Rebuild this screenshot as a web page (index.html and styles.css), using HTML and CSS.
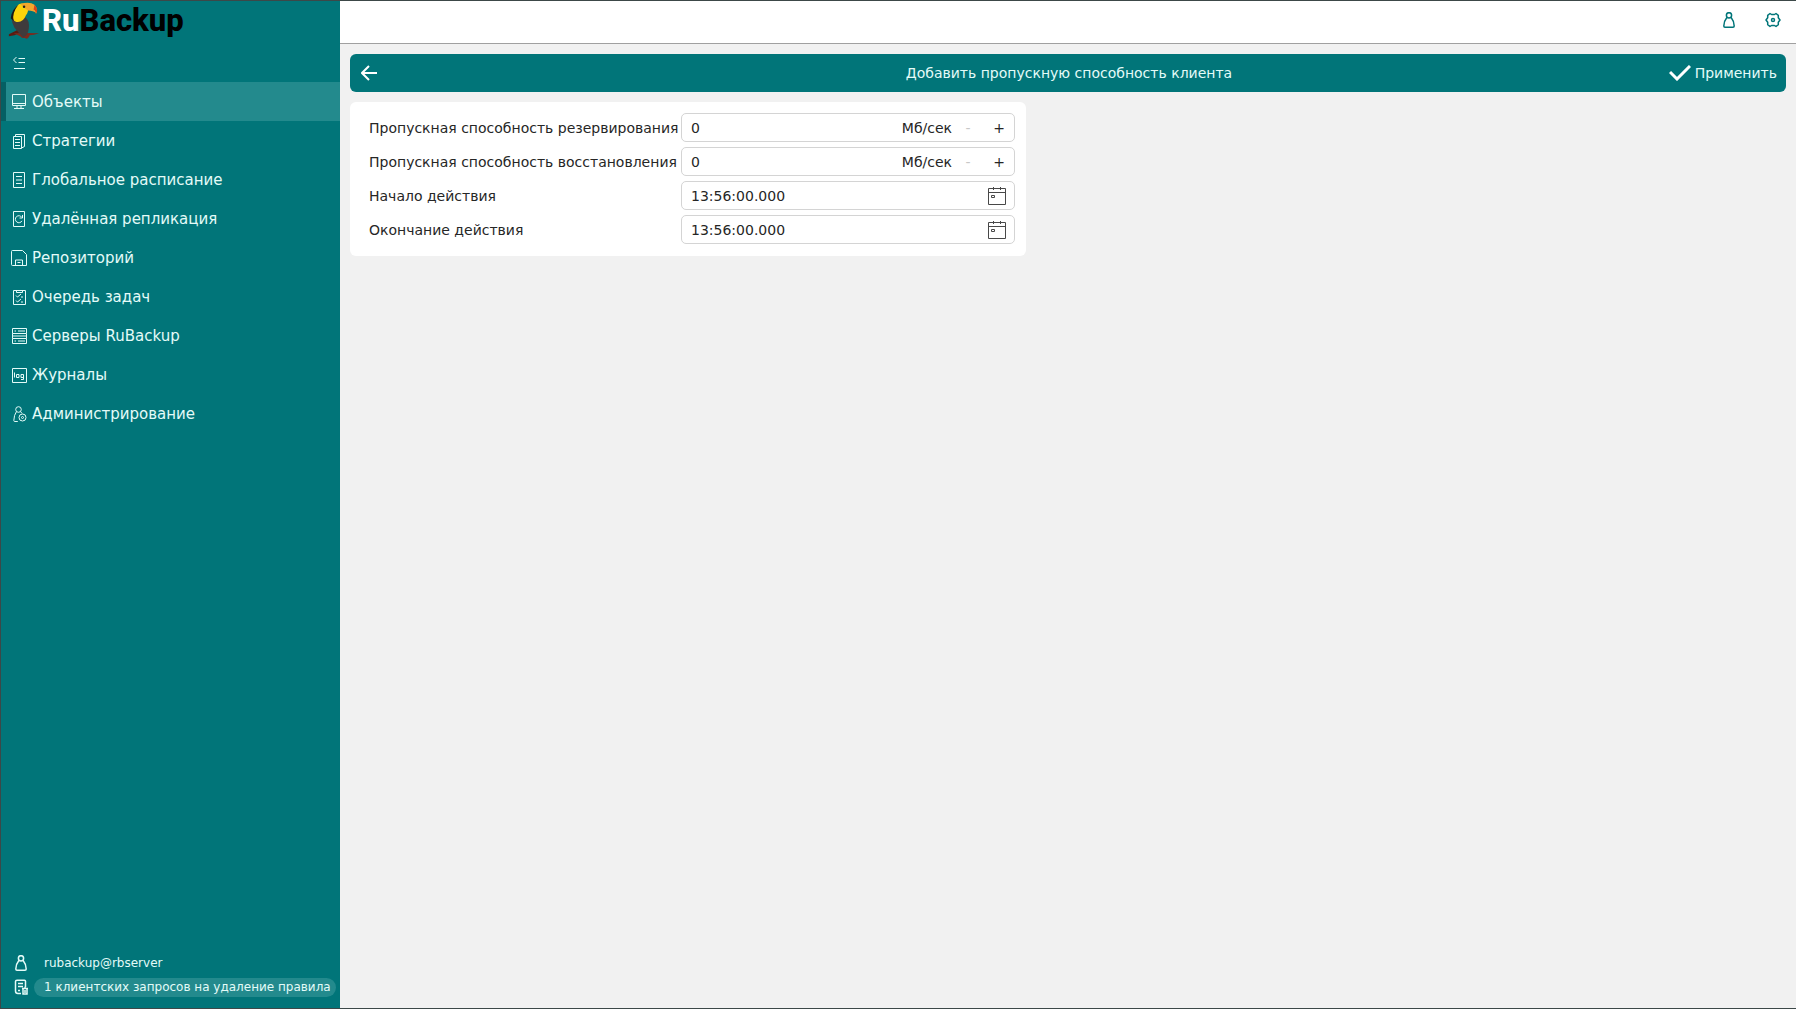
FILE: index.html
```html
<!DOCTYPE html>
<html lang="ru">
<head>
<meta charset="utf-8">
<title>RuBackup</title>
<link rel="stylesheet" href="styles.css">
</head>
<body>
<div class="app">
  <aside class="sidebar">
    <div class="logo">
      <svg class="toucan" viewBox="0 0 34 40" aria-hidden="true">
        <path d="M0 34 L10 29 L12 32 L6 35 L0 36 Z" fill="#5a1a12"/>
        <path d="M5 33 Q18 32 32 33 Q26 35 22 35 Q20 40 17 38 Q13 38 12 36 Z" fill="#7a2a1d"/>
        <path d="M3 17 Q8 11 17 16 Q22 19 21 28 Q20 36 15 37 Q10 32 6 27 Q3 22 3 17 Z" fill="#3f3b3c"/>
        <path d="M11 2 Q17 0 20 6 Q21 10 18 14 Q15 22 8 21 Q3 20 4 13 Q6 5 11 2 Z" fill="#fbd40b"/>
        <path d="M10 3 Q3 8 2 17 L5 20 Q3 12 10 3 Z" fill="#171717"/>
        <path d="M12 2 Q22 -1 27 3 Q31 7 29 12 Q26 9 20 9 L16 6 Z" fill="#f5a62b"/>
        <path d="M27 3 Q32 8 28 13 Q29 9 26 8 Z" fill="#d9441c"/>
        <circle cx="16" cy="5" r="1.3" fill="#26221d"/>
      </svg>
      <span class="brand"><span class="brand-ru">Ru</span>Backup</span>
    </div>
    <button class="collapse" type="button" aria-label="Свернуть меню">
      <svg class="icon" viewBox="0 0 16 16"><path d="M5.500 2L2.500 5l3 3M7.500 3.500h6.500M7.500 7.500h6.500M3 13.500h11"/></svg>
    </button>
    <nav class="nav">
      <a class="nav-item active" href="#"><svg class="icon" viewBox="0 0 16 16"><path d="M1.500 .5h13v11h-13zM1.500 9.500h13M6 11.500v3M10 11.500v3M3 14.500h10"/></svg>Объекты</a>
      <a class="nav-item" href="#"><svg class="icon" viewBox="0 0 16 16"><path d="M2.500 3.500h8v12h-8zM4.500 3.500v-2h9v12l-3 1.500M4 6.500h5M4 9.500h5M4 12.500h5"/></svg>Стратегии</a>
      <a class="nav-item" href="#"><svg class="icon" viewBox="0 0 16 16"><path d="M2.500 .5h11v15h-11zM5 4.500h6M5 8h6M5 11.500h6"/></svg>Глобальное расписание</a>
      <a class="nav-item" href="#"><svg class="icon" viewBox="0 0 16 16"><path d="M2.500 .5h11v15h-11zM10.800 6.300A3.500 3.500 0 1 0 11 9.800M11.500 4v3h-3"/></svg>Удалённая репликация</a>
      <a class="nav-item" href="#"><svg class="icon" viewBox="0 0 16 16"><path d="M1.500 .5h10l4 4v11H1.500q-1 0-1-1v-13q0-1 1-1zM4.500 15.500v-5.500h7v5.500M6.500 12.500h3"/></svg>Репозиторий</a>
      <a class="nav-item" href="#"><svg class="icon" viewBox="0 0 16 16"><path d="M2.500 1.500h12v14h-12zM5.500 1.500v2h6v-2M5 6.500l1.500 1.500 3.500-3M5 11.500l1.500 1.500 3.500-3M10 8h2M10 13h2"/></svg>Очередь задач</a>
      <a class="nav-item" href="#"><svg class="icon" viewBox="0 0 16 16"><path d="M1.500 .5h14v5h-14zM1.500 5.500v5M15.500 5.500v5M1.500 10.500h14v5h-14zM1.500 8h14M3.500 3h1.500M7 3h7M3.500 13h1.500M7 13h7"/></svg>Серверы RuBackup</a>
      <a class="nav-item" href="#"><svg class="icon" viewBox="0 0 16 16"><path d="M1.500 1.500h14v14h-14zM3.500 5.500v5M5.500 7.500h2.500v3h-2.500zM12.500 10.500h-2.500v-3h2.500v5h-2.500"/></svg>Журналы</a>
      <a class="nav-item" href="#"><svg class="icon" viewBox="0 0 16 16"><circle cx="7.500" cy="3.500" r="2.800"/><path d="M5.500 5.500Q3 9 2.800 14.500q0 1 1 1h3M9.500 5.500l1.500 2"/><circle cx="11.500" cy="11.500" r="3.500"/><circle cx="11.500" cy="11.500" r="1"/></svg>Администрирование</a>
    </nav>
    <footer class="status">
      <div class="status-row">
        <svg class="icon bold" viewBox="0 0 16 16"><circle cx="8" cy="3.300" r="2.600"/><path d="M6 5.300Q3 9 2.800 14q0 1.200 1.200 1.200h8q1.200 0 1.200-1.200Q13 9 10 5.300"/></svg>
        <span class="status-text">rubackup@rbserver</span>
      </div>
      <div class="status-row">
        <svg class="icon bold" viewBox="0 0 16 16"><path d="M8 14.500H5Q2.500 14.500 2.500 12V2.500Q2.500 1.200 4 1.200h7.500q1 0 1 1V8M5 4.500h5M5 7.500h5M5 11.500h2M9 9.500h6M10 10v5h4v-5M11.300 8.500h1.500M12 11v3"/></svg>
        <a class="status-text pill" href="#">1 клиентских запросов на удаление правила</a>
      </div>
    </footer>
  </aside>
  <div class="main">
    <header class="topbar">
      <button type="button" aria-label="Пользователь"><svg class="icon bold" viewBox="0 0 16 16"><circle cx="8" cy="3.300" r="2.600"/><path d="M6 5.300Q3 9 2.800 14q0 1.200 1.200 1.200h8q1.200 0 1.200-1.200Q13 9 10 5.300"/></svg></button>
      <button type="button" aria-label="Настройки"><svg class="icon bold" viewBox="0 0 16 16"><path d="M5 1.500L6.500 2.500h3L11 1.500l2.300 1.800v2.400L15 8l-1.700 2.300v2.400L11 14.500l-1.500-1h-3l-1.500 1-2.300-1.800v-2.400L1 8l1.700-2.300V3.300z" stroke-linejoin="round"/><circle cx="8" cy="8" r="1.500"/></svg></button>
    </header>
    <main class="content">
      <div class="toolbar">
        <button class="back" type="button" aria-label="Назад"><svg viewBox="0 0 16 16"><path d="M8 1L1 8l7 7M1 8h15"/></svg></button>
        <h1 class="title">Добавить пропускную способность клиента</h1>
        <button class="apply" type="submit" form="bandwidth"><svg viewBox="0 0 22 16"><path d="M1 7l7 7L21 1"/></svg>Применить</button>
      </div>
      <form class="card" id="bandwidth">
        <label for="backup">Пропускная способность резервирования</label>
        <div class="field">
          <input id="backup" type="text" value="0"><span class="unit">Мб/сек</span>
          <button class="step" type="button" disabled>-</button><button class="step" type="button">+</button>
        </div>
        <label for="restore">Пропускная способность восстановления</label>
        <div class="field">
          <input id="restore" type="text" value="0"><span class="unit">Мб/сек</span>
          <button class="step" type="button" disabled>-</button><button class="step" type="button">+</button>
        </div>
        <label for="start">Начало действия</label>
        <div class="field">
          <input id="start" type="text" value="13:56:00.000">
          <button class="calendar" type="button" aria-label="Выбрать начало"><svg viewBox="0 0 18 18"><path d="M.5 1.500h17v16H.5zM.5 5.500h17M5.500 0v3M12.500 0v3M3.500 8.500h3v2h-3z"/></svg></button>
        </div>
        <label for="end">Окончание действия</label>
        <div class="field">
          <input id="end" type="text" value="13:56:00.000">
          <button class="calendar" type="button" aria-label="Выбрать окончание"><svg viewBox="0 0 18 18"><path d="M.5 1.500h17v16H.5zM.5 5.500h17M5.500 0v3M12.500 0v3M3.500 8.500h3v2h-3z"/></svg></button>
        </div>
      </form>
    </main>
  </div>
</div>
</body>
</html>
```
FILE: styles.css
```css
* { box-sizing: border-box; }

body {
  margin: 0;
  font: 14px/20px "DejaVu Sans", sans-serif;
  color: #262626;
  background: #f1f1f1;
}

button, input { font: inherit; color: inherit; }
button { border: 0; padding: 0; background: none; }
svg { display: block; flex: none; fill: none; stroke: currentColor; }
a { color: inherit; text-decoration: none; }

.app {
  display: flex;
  min-height: 100vh;
  border: 1px solid #3c4848;
  border-right: 0;
}

.sidebar {
  flex: 0 0 339px;
  display: flex;
  flex-direction: column;
  color: #e4fbf8;
  background: #017579;
}

.logo {
  display: flex;
  align-items: center;
  height: 40px;
  padding-left: 7px;
}

.toucan { width: 34px; height: 38px; stroke: none; }
.brand { font: 800 31px/38px Roboto, sans-serif; color: #000; }
.brand-ru { color: #fff; }

.icon { width: 16px; height: 16px; }
.bold { stroke-width: 1.5; }

.collapse { align-self: flex-start; margin: 14px 0 11px 10px; }

.nav-item {
  display: flex;
  align-items: center;
  gap: 5px;
  height: 39px;
  padding-left: 10px;
  font-size: 15px;
}

.active {
  padding-left: 5px;
  border-left: 5px solid #055f63;
  background: #238a8d;
}

.status { margin-top: auto; padding: 0 4px 10px 12px; font-size: 12px; }
.status-row { display: flex; align-items: center; gap: 5px; height: 26px; }
.status-row + .status-row { height: 22px; }
.status-text { padding: 0 5px 0 10px; line-height: 19px; white-space: nowrap; }
.pill { border-radius: 10px; background: #238a8d; }

.main { flex: 1; min-width: 0; }

.topbar {
  display: flex;
  justify-content: flex-end;
  align-items: center;
  gap: 28px;
  height: 43px;
  padding: 0 15px 5px;
  border-bottom: 1px solid #a0a0a0;
  color: #017579;
  background: #fff;
}

.content { padding: 10px; }

.toolbar {
  display: grid;
  grid-template-columns: 1fr auto 1fr;
  align-items: center;
  height: 38px;
  padding: 0 9px 0 11px;
  border-radius: 6px;
  color: #e4fbf8;
  background: #017579;
}

.title { margin: 0; font-size: 14px; font-weight: 400; }
.back { justify-self: start; color: #fff; }
.back svg { width: 16px; height: 16px; stroke-width: 2; }
.apply { justify-self: end; display: flex; align-items: center; gap: 4px; }
.apply svg { width: 22px; height: 16px; stroke: #fff; stroke-width: 3; }

.card {
  display: grid;
  grid-template-columns: 308px 334px;
  column-gap: 4px;
  row-gap: 5px;
  align-items: center;
  width: max-content;
  margin-top: 10px;
  padding: 11px 11px 12px 19px;
  border-radius: 6px;
  white-space: nowrap;
  background: #fff;
}

.field {
  display: flex;
  align-items: center;
  height: 29px;
  padding: 0 8px 0 9px;
  border: 1px solid #d4d4d4;
  border-radius: 5px;
}

.field input { flex: 1; min-width: 0; padding: 0; border: 0; outline: 0; background: none; }
.step { width: 32px; }
.step:last-child { width: 14px; margin-left: 8px; }
.step:disabled { color: #c8c8c8; }
.calendar svg { width: 18px; height: 18px; color: #484848; }
```
